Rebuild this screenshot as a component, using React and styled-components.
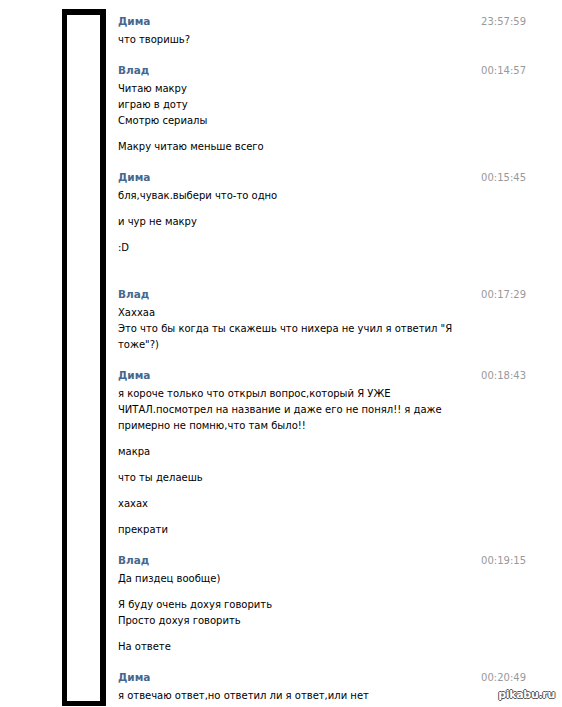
import React from "react";
import styled, { createGlobalStyle } from "styled-components";

const Global = createGlobalStyle`
  html, body { margin: 0; padding: 0; background: #fff; }
  body { font-family: "DejaVu Sans", "Liberation Sans", sans-serif; }
`;

const Page = styled.div`
  position: relative;
  width: 562px;
  height: 707px;
  overflow: hidden;
  display: flex;
  align-items: flex-start;
  padding: 9px 0 0 62px;
  box-sizing: border-box;
`;

const Frame = styled.div`
  flex: none;
  width: 44px;
  height: 697px;
  box-sizing: border-box;
  border-style: solid;
  border-color: #000;
  border-width: 6px 6px 5px 5px;
`;

const Chat = styled.div`
  margin-left: 12px;
  width: 408px;
  display: flex;
  flex-direction: column;
  gap: 15px;
  padding-top: 5px;
`;

const Block = styled.div`
  display: flex;
  flex-direction: column;
`;

const Header = styled.div`
  display: flex;
  justify-content: space-between;
  align-items: baseline;
  height: 18px;
`;

const Name = styled.span`
  font-weight: bold;
  font-size: 10.5px;
  color: #45688e;
  line-height: 15px;
`;

const Time = styled.span`
  font-size: 10px;
  color: #999;
  line-height: 15px;
`;

const Para = styled.div`
  font-size: 10px;
  line-height: 16px;
  color: #000;
  white-space: nowrap;
  & + & { margin-top: 10px; }
`;

const Watermark = styled.div`
  position: absolute;
  right: 7px;
  bottom: 6px;
  font-family: "DejaVu Sans", sans-serif;
  font-weight: bold;
  font-size: 11px;
  letter-spacing: -0.3px;
  color: #fff;
  text-shadow: -1px 0 #555, 1px 0 #555, 0 -1px #555, 0 1px #555;
`;

const messages = [
  { name: "Дима", time: "23:57:59", paras: [["что творишь?"]] },
  {
    name: "Влад",
    time: "00:14:57",
    paras: [["Читаю макру", "играю в доту", "Смотрю сериалы"], ["Макру читаю меньше всего"]],
  },
  {
    name: "Дима",
    time: "00:15:45",
    paras: [["бля,чувак.выбери что-то одно"], ["и чур не макру"], [":D", "\u00a0"]],
  },
  {
    name: "Влад",
    time: "00:17:29",
    paras: [["Хаххаа", "Это что бы когда ты скажешь что нихера не учил я ответил \"Я", "тоже\"?)"]],
  },
  {
    name: "Дима",
    time: "00:18:43",
    paras: [
      [
        "я короче только что открыл вопрос,который Я УЖЕ",
        "ЧИТАЛ.посмотрел на название и даже его не понял!! я даже",
        "примерно не помню,что там было!!",
      ],
      ["макра"],
      ["что ты делаешь"],
      ["хахах"],
      ["прекрати"],
    ],
  },
  {
    name: "Влад",
    time: "00:19:15",
    paras: [["Да пиздец вообще)"], ["Я буду очень дохуя говорить", "Просто дохуя говорить"], ["На ответе"]],
  },
  {
    name: "Дима",
    time: "00:20:49",
    paras: [["я отвечаю ответ,но ответил ли я ответ,или нет"]],
  },
];

export default function App() {
  return (
    <>
      <Global />
      <Page>
        <Frame />
        <Chat>
          {messages.map((m, i) => (
            <Block key={i}>
              <Header>
                <Name>{m.name}</Name>
                <Time>{m.time}</Time>
              </Header>
              {m.paras.map((p, j) => (
                <Para key={j}>
                  {p.map((line, k) => (
                    <React.Fragment key={k}>
                      {k > 0 && <br />}
                      {line}
                    </React.Fragment>
                  ))}
                </Para>
              ))}
            </Block>
          ))}
        </Chat>
        <Watermark>pikabu.ru</Watermark>
      </Page>
    </>
  );
}
